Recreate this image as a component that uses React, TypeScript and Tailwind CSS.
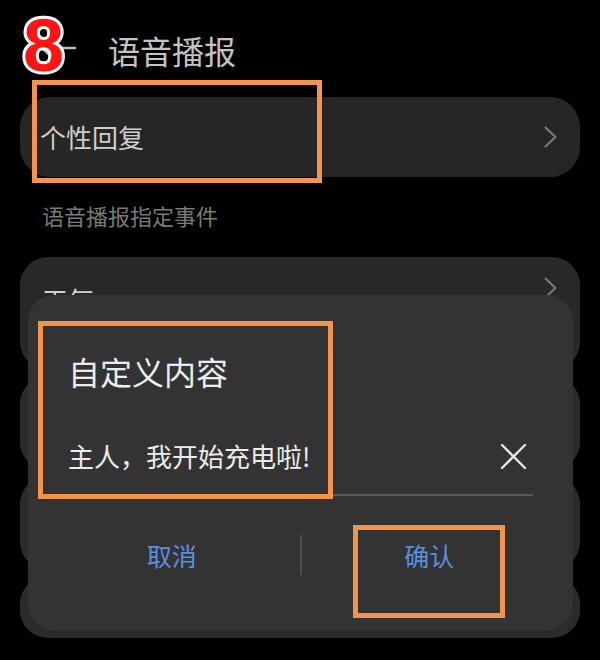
import React from "react";

const CJK = "font-['Noto_Sans_CJK_SC','Noto_Sans',sans-serif]";

function Chevron({ className }: { className?: string }) {
  return (
    <svg className={className} width="13" height="22" viewBox="0 0 13 22" fill="none">
      <polyline points="1.5,1.5 11.5,11 1.5,20.5" stroke="#7c7c7c" strokeWidth="2" strokeLinecap="round" strokeLinejoin="round" />
    </svg>
  );
}

function Mark({ className }: { className: string }) {
  return <div className={`pointer-events-none absolute border-[5px] border-[#f2944c] ${className}`} />;
}

export default function App() {
  return (
    <div className={`relative h-[660px] w-[600px] overflow-hidden bg-black ${CJK}`}>
      <div className="px-5">
        {/* header */}
        <div className="relative flex h-[97px] items-start pt-[30px]">
          <svg className="absolute left-0 top-[34px]" width="60" height="30" viewBox="0 0 60 30" fill="none">
            <path d="M55 14 H22 M34 3 L22 14 L34 25" stroke="#bdbdbd" strokeWidth="2.5" strokeLinecap="round" />
          </svg>
          <h1 className="ml-[88px] text-[32px] leading-[40px] font-normal text-[#c4c4c4]">语音播报</h1>
        </div>

        {/* 个性回复 */}
        <div className="flex h-[80px] items-center justify-between rounded-[30px] bg-[#262626] pl-5 pr-[23px]">
          <span className="text-[26px] leading-none text-[#cecece]">个性回复</span>
          <Chevron />
        </div>

        <p className="mt-[23px] pl-[22px] text-[22px] leading-[30px] text-[#7a7a7a]">语音播报指定事件</p>

        {/* event list (behind dialog) */}
        <div className="mt-[27px] flex flex-col gap-[6px]">
          <div className="flex h-[113px] items-start justify-between rounded-[28px] bg-[#282828] pl-[22px] pr-[23px] pt-[24px]">
            <span className="text-[26px] leading-[38px] text-[#d2d2d2]">天气</span>
            <Chevron className="mt-[-4px]" />
          </div>
          <div className="h-[94px] rounded-[28px] bg-[#2b2b2b]" />
          <div className="h-[94px] rounded-[28px] bg-[#2b2b2b]" />
          <div className="h-[62px] rounded-[28px] bg-[#2b2b2b]" />
        </div>
      </div>

      {/* dialog */}
      <div className="absolute left-[28px] top-[295px] h-[335px] w-[545px] rounded-[26px] bg-[#333333]">
        <div className="px-10 pt-[56px]">
          <h2 className="text-[32px] leading-[40px] font-normal text-[#ececec]">自定义内容</h2>
          <div className="mt-[45px] h-[60px] border-b-2 border-[#5a5a5a]">
            <div className="flex h-[40px] items-center justify-between">
              <span className="text-[26px] leading-none text-[#ececec]">主人，我开始充电啦!</span>
              <svg className="mr-[6px]" width="27" height="27" viewBox="0 0 27 27" fill="none">
                <path d="M2 2 L25 25 M25 2 L2 25" stroke="#e6e6e6" strokeWidth="2.4" strokeLinecap="round" />
              </svg>
            </div>
          </div>
        </div>
        <div className="mt-[31px] flex h-[56px] items-center px-4">
          <button className="flex-1 text-center text-[25px] leading-none text-[#5b8fe0]">取消</button>
          <div className="h-[40px] w-[2px] bg-[#505050]" />
          <button className="flex-1 text-center text-[25px] leading-none text-[#5b8fe0]">确认</button>
        </div>
      </div>

      {/* annotations */}
      <Mark className="left-[32px] top-[80px] h-[103px] w-[290px]" />
      <Mark className="left-[38px] top-[321px] h-[178px] w-[295px]" />
      <Mark className="left-[353px] top-[525px] h-[93px] w-[152px]" />

      <svg className="pointer-events-none absolute left-[18px] top-[2px]" width="60" height="90" viewBox="0 0 60 90">
        <text
          x="5"
          y="69"
          fontFamily="'Liberation Sans', Arial, sans-serif"
          fontWeight="700"
          fontSize="74"
          fill="#ff1414"
          stroke="#ffffff"
          strokeWidth="6"
          strokeLinejoin="round"
          paintOrder="stroke"
        >
          8
        </text>
      </svg>
    </div>
  );
}
